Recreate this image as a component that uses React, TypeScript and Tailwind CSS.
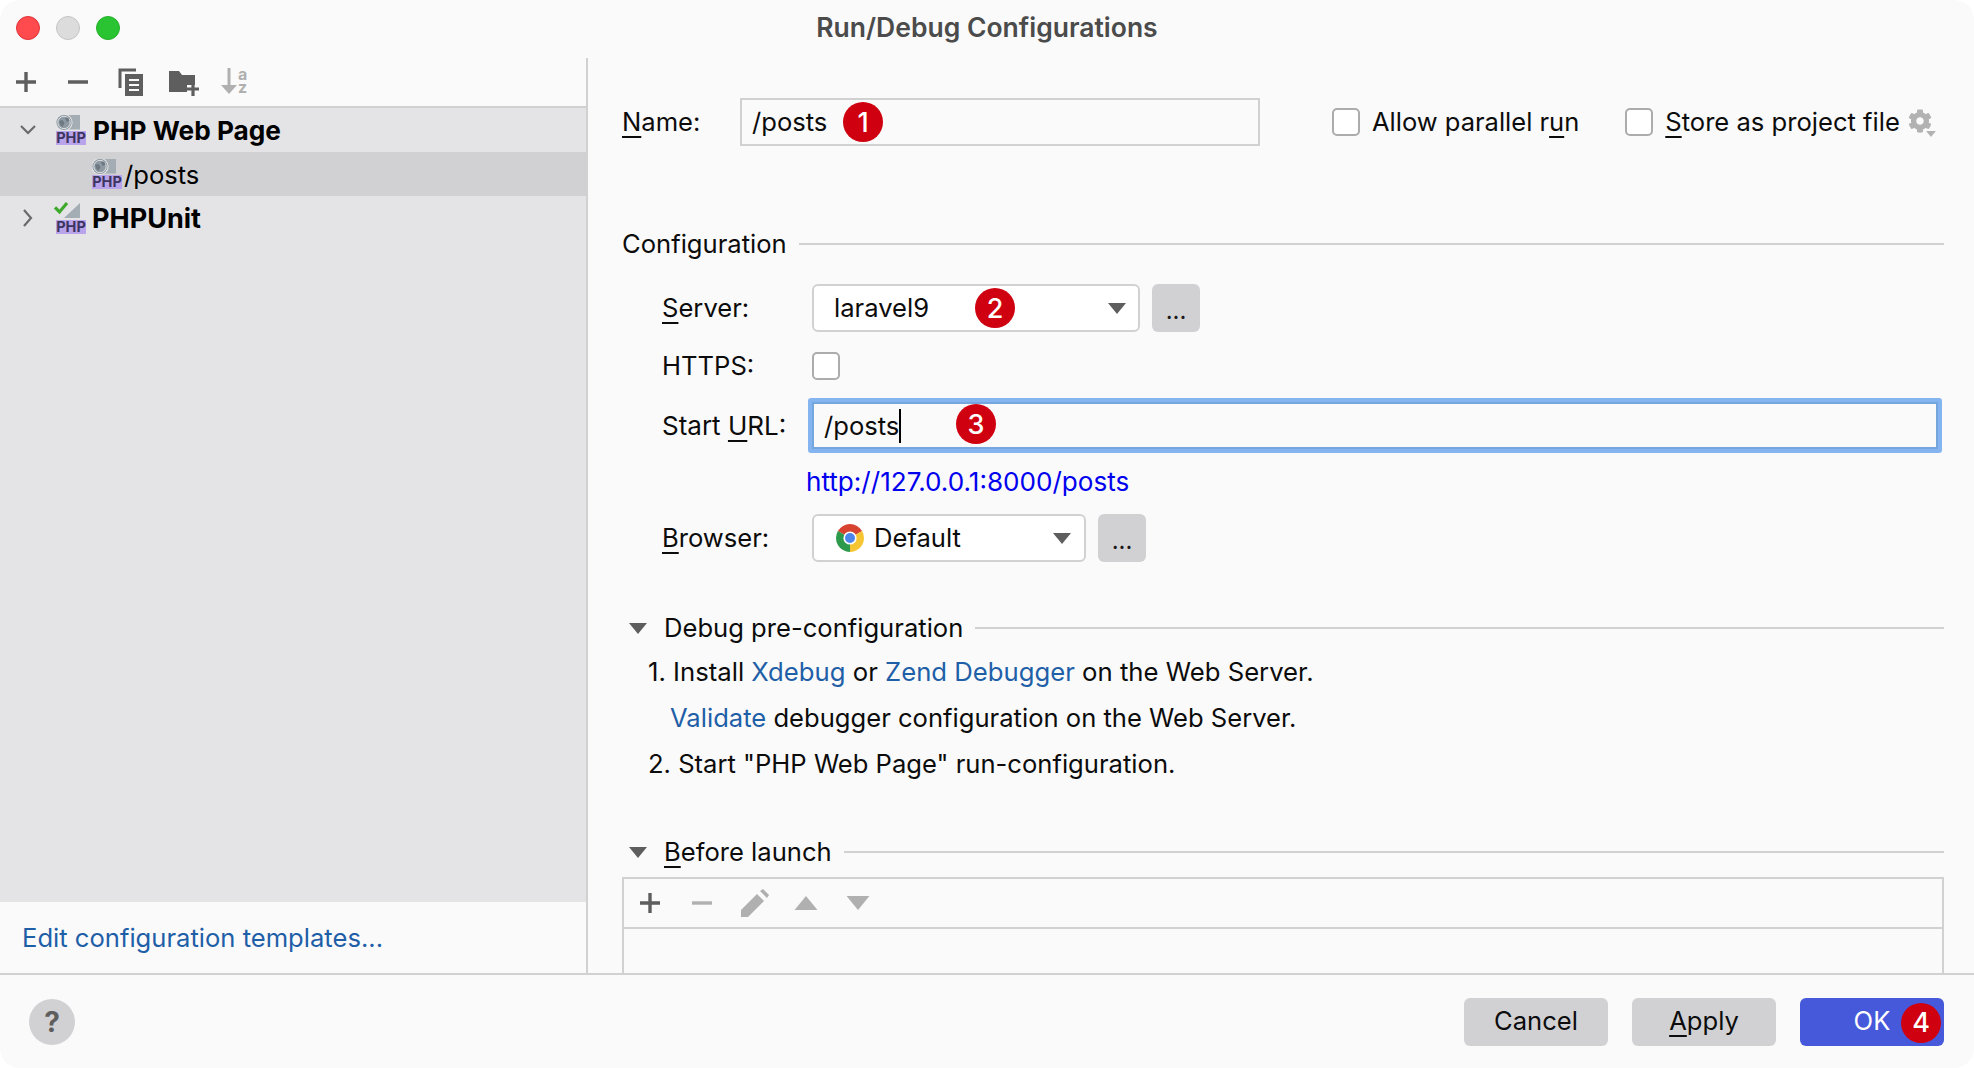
import React from "react";
import { FaCog } from "react-icons/fa";

const Badge = ({ n, className }: { n: number; className: string }) => (
  <span className={`absolute flex h-[40px] w-[40px] items-center justify-center rounded-full bg-[#cf0010] text-[27px] font-medium leading-none text-white ${className}`}>
    {n}
  </span>
);

const U = ({ children }: { children: React.ReactNode }) => (
  <span className="underline decoration-2 underline-offset-[5px] [text-decoration-skip-ink:none]">{children}</span>
);

const Plus = ({ c = "#5e5e5e" }: { c?: string }) => (
  <svg width="22" height="22" viewBox="0 0 22 22"><path d="M11 1v20M1 11h20" stroke={c} strokeWidth="3.4" /></svg>
);
const Minus = ({ c = "#5e5e5e" }: { c?: string }) => (
  <svg width="22" height="22" viewBox="0 0 22 22"><path d="M1 11h20" stroke={c} strokeWidth="3.4" /></svg>
);
const Caret = ({ c = "#5e5e5e", w = 18, h = 11, up = false }: { c?: string; w?: number; h?: number; up?: boolean }) => (
  <svg width={w} height={h} viewBox="0 0 18 11"><path d={up ? "M9 0L18 11H0Z" : "M0 0H18L9 11Z"} fill={c} /></svg>
);

const PhpLabel = ({ className = "left-0" }: { className?: string }) => (
  <span className={`absolute bottom-0 flex h-[14px] w-[30px] items-center justify-center bg-[#b9a3ea] text-[14.5px] font-bold leading-none text-[#3c3560] ${className}`}>
    PHP
  </span>
);

const PhpWebIcon = () => (
  <span className="relative block h-[30px] w-[30px] shrink-0">
    <svg className="absolute left-0 top-0" width="30" height="16" viewBox="0 0 30 16">
      <rect x="10" y="0" width="14" height="14.5" fill="#a4adb4" />
      <circle cx="8" cy="7.5" r="8.6" fill="#e4e4e6" />
      <circle cx="8" cy="7.5" r="7.6" fill="#8e9aa3" />
      <circle cx="8" cy="7.5" r="6.2" fill="none" stroke="#dfe0e2" strokeWidth="1" />
      <path d="M3 6l3.5-1 2 3-2 4-2-2ZM9 3l3-.5 1.6 3-3 1.5Z" fill="#6d7880" />
    </svg>
    <PhpLabel />
  </span>
);

const PhpUnitIcon = () => (
  <span className="relative block h-[32px] w-[32px] shrink-0">
    <svg className="absolute left-0 top-0" width="32" height="18" viewBox="0 0 32 18">
      <path d="M26 1v15H10Z" fill="#a4adb4" />
      <path d="M1 5.5l4.5 4.5L13 1" stroke="#3fa92e" strokeWidth="3.2" fill="none" />
    </svg>
    <PhpLabel className="left-[2px]" />
  </span>
);

const Chrome = () => (
  <svg width="28" height="28" viewBox="0 0 28 28" className="shrink-0">
    <path d="M14 14L1.88 7A14 14 0 0 1 26.12 7Z" fill="#d8432f" />
    <path d="M14 14L26.12 7A14 14 0 0 1 14 28Z" fill="#f6c533" />
    <path d="M14 14L14 28A14 14 0 0 1 1.88 7Z" fill="#2c9a4a" />
    <circle cx="14" cy="14" r="6.6" fill="#fff" />
    <circle cx="14" cy="14" r="5" fill="#4d86ea" />
  </svg>
);

const Checkbox = () => (
  <span className="block h-[28px] w-[28px] shrink-0 rounded-[5px] border-2 border-[#acacac] bg-white" />
);

const Dots = () => (
  <button className="flex h-[48px] w-[48px] shrink-0 items-end justify-center rounded-[6px] bg-[#d1d1d4] pb-[9px] text-[24px] leading-none text-[#1a1a1a]">
    ...
  </button>
);

const Section = ({ children, arrow = false, mt }: { children: React.ReactNode; arrow?: boolean; mt: string }) => (
  <div className={`flex h-[30px] items-center ${mt} ${arrow ? "pl-[7px]" : ""}`}>
    {arrow && <span className="mr-[17px] flex w-[18px] shrink-0"><Caret /></span>}
    <span className="shrink-0">{children}</span>
    <span className="ml-[12px] h-[2px] flex-1 bg-[#d1d1d1]" />
  </div>
);

const Link = ({ children }: { children: React.ReactNode }) => <span className="text-[#1f5fa8]">{children}</span>;

export default function App() {
  return (
    <div className="h-[1068px] w-[1974px] bg-white font-['Inter',sans-serif] text-[25.6px] text-[#0c0c0c]">
      <div className="flex h-full flex-col overflow-hidden rounded-[20px] bg-[#fafafa]">
        {/* Title bar */}
        <div className="relative flex h-[58px] shrink-0 items-center justify-center pb-[3px]">
          <div className="absolute left-[16px] top-[16px] flex gap-[16px]">
            <span className="h-[24px] w-[24px] rounded-full border border-[#e0353a] bg-[#ff4a4e]" />
            <span className="h-[24px] w-[24px] rounded-full border border-[#c4c4c4] bg-[#dcdcdc]" />
            <span className="h-[24px] w-[24px] rounded-full border border-[#25b02c] bg-[#2ac331]" />
          </div>
          <span className="text-[26.5px] font-semibold text-[#4b4b4b]">Run/Debug Configurations</span>
        </div>

        <div className="flex min-h-0 flex-1">
          {/* Sidebar */}
          <div className="flex w-[588px] shrink-0 flex-col border-r-2 border-[#d1d1d1]">
            <div className="flex h-[50px] shrink-0 items-center border-b-2 border-[#d1d1d1] pl-[15px]">
              <Plus />
              <span className="ml-[30px]"><Minus /></span>
              <svg className="ml-[29px]" width="26" height="28" viewBox="0 0 26 28">
                <path d="M2 20V2H18" fill="none" stroke="#5e5e5e" strokeWidth="3" />
                <path d="M7 6h18v22H7Z" fill="#5e5e5e" />
                <path d="M11 12h10M11 17h10M11 22h10" stroke="#fafafa" strokeWidth="2" />
              </svg>
              <svg className="ml-[25px]" width="30" height="28" viewBox="0 0 30 28">
                <path d="M0 3h10l3 4h13v10h-8v7H0Z" fill="#5e5e5e" />
                <path d="M24 14v14M17 21h13" stroke="#5e5e5e" strokeWidth="3.2" />
              </svg>
              <span className="relative ml-[22px] block h-[28px] w-[26px]">
                <svg className="absolute left-0 top-0" width="16" height="28" viewBox="0 0 16 28">
                  <path d="M8 0v22" stroke="#b0b0b0" strokeWidth="3" />
                  <path d="M0 17L8 26l8-9Z" fill="#b0b0b0" />
                </svg>
                <span className="absolute left-[17px] top-0 text-[16px] font-bold leading-[13px] text-[#b0b0b0]">a</span>
                <span className="absolute left-[17px] top-[13px] text-[16px] font-bold leading-[13px] text-[#b0b0b0]">z</span>
              </span>
            </div>

            <div className="flex-1 bg-[#e4e4e6]">
              <div className="flex h-[44px] items-center pl-[20px]">
                <svg width="16" height="10" viewBox="0 0 16 10"><path d="M1 1l7 7 7-7" fill="none" stroke="#6a6a6a" strokeWidth="2.2" /></svg>
                <span className="ml-[20px]"><PhpWebIcon /></span>
                <span className="ml-[7px] pt-[2px] text-[26.2px] font-bold leading-none text-black">PHP Web Page</span>
              </div>
              <div className="flex h-[44px] items-center bg-[#d1d1d3] pl-[92px]">
                <PhpWebIcon />
                <span className="ml-[2px] pt-[2px] leading-none text-black">/posts</span>
              </div>
              <div className="flex h-[44px] items-center pl-[23px]">
                <svg width="10" height="18" viewBox="0 0 10 18"><path d="M1 1l7 8-7 8" fill="none" stroke="#6a6a6a" strokeWidth="2.2" /></svg>
                <span className="ml-[21px]"><PhpUnitIcon /></span>
                <span className="ml-[6px] text-[27px] font-bold leading-none text-black">PHPUnit</span>
              </div>
            </div>

            <div className="flex h-[71px] shrink-0 items-center pl-[22px] pt-[2px]">
              <Link>Edit configuration templates...</Link>
            </div>
          </div>

          {/* Form */}
          <div className="flex min-w-0 flex-1 flex-col pl-[34px] pr-[30px]">
            <div className="mt-[40px] flex h-[48px] shrink-0 items-center">
              <span className="w-[118px] shrink-0"><U>N</U>ame:</span>
              <div className="relative flex h-[48px] w-[520px] shrink-0 items-center border-2 border-[#d1d1d1] pl-[10px]">
                /posts
                <Badge n={1} className="left-[101px] top-[2px]" />
              </div>
              <span className="ml-[72px]"><Checkbox /></span>
              <span className="ml-[12px] whitespace-nowrap text-[25.5px]">Allow parallel r<U>u</U>n</span>
              <span className="ml-[46px]"><Checkbox /></span>
              <span className="ml-[12px] whitespace-nowrap"><U>S</U>tore as project file</span>
              <span className="relative ml-[8px] block h-[26px] w-[26px] shrink-0">
                <FaCog className="h-[24px] w-[24px] text-[#b2b2b2]" />
                <span className="absolute bottom-[-2px] right-[-2px] flex"><Caret c="#b2b2b2" w={10} h={6} /></span>
              </span>
            </div>

            <Section mt="mt-[83px]">Configuration</Section>

            <div className="mt-[25px] flex h-[48px] shrink-0 items-center pl-[40px]">
              <span className="w-[150px] shrink-0"><U>S</U>erver:</span>
              <div className="relative flex h-[48px] w-[328px] shrink-0 items-center rounded-[6px] border-2 border-[#d1d1d1] bg-white pl-[20px]">
                laravel9
                <Badge n={2} className="left-[161px] top-[2px]" />
                <span className="absolute right-[12px] top-[17px] flex"><Caret /></span>
              </div>
              <span className="ml-[12px]"><Dots /></span>
            </div>

            <div className="mt-[20px] flex h-[28px] shrink-0 items-center pl-[40px]">
              <span className="w-[150px] shrink-0">HTTPS:</span>
              <Checkbox />
            </div>

            <div className="mt-[18px] flex h-[55px] shrink-0 items-center pl-[40px] pr-[2px]">
              <span className="w-[146px] shrink-0 text-[26px]">Start <U>U</U>RL:</span>
              <div className="relative flex h-[55px] flex-1 items-center rounded-[3px] border-[4px] border-[#85b5f0] bg-[#fafafa] pl-[12px] shadow-[inset_0_0_0_2px_#76a6de]">
                <span className="border-r-2 border-black leading-[34px]">/posts</span>
                <Badge n={3} className="left-[144px] top-[2px]" />
              </div>
            </div>

            <div className="mt-[14px] h-[30px] shrink-0 pl-[184px] text-[26.1px] leading-[30px] text-[#0000ee]">http://127.0.0.1:8000/posts</div>

            <div className="mt-[17px] flex h-[48px] shrink-0 items-center pl-[40px]">
              <span className="w-[150px] shrink-0"><U>B</U>rowser:</span>
              <div className="relative flex h-[48px] w-[274px] shrink-0 items-center rounded-[6px] border-2 border-[#d1d1d1] bg-white pl-[22px]">
                <Chrome />
                <span className="ml-[10px]">Default</span>
                <span className="absolute right-[13px] top-[17px] flex"><Caret /></span>
              </div>
              <span className="ml-[12px]"><Dots /></span>
            </div>

            <Section arrow mt="mt-[51px]">Debug pre-configuration</Section>

            <div className="mt-[14px] h-[30px] shrink-0 pl-[26px] text-[25.7px] leading-[30px]">1. Install <Link>Xdebug</Link> or <Link>Zend Debugger</Link> on the Web Server.</div>
            <div className="mt-[16px] h-[30px] shrink-0 pl-[48px] leading-[30px]"><Link>Validate</Link> debugger configuration on the Web Server.</div>
            <div className="mt-[16px] h-[30px] shrink-0 pl-[26px] leading-[30px]">2. Start "PHP Web Page" run-configuration.</div>

            <Section arrow mt="mt-[58px]"><U>B</U>efore launch</Section>

            <div className="mt-[10px] min-h-0 flex-1 border-x-2 border-t-2 border-[#d1d1d1]">
              <div className="flex h-[50px] items-center border-b-2 border-[#d1d1d1] pl-[15px]">
                <Plus />
                <span className="ml-[30px]"><Minus c="#b0b0b0" /></span>
                <svg className="ml-[28px]" width="28" height="28" viewBox="0 0 28 28">
                  <path d="M0 28v-7L16 5l7 7L7 28Z" fill="#b0b0b0" />
                  <path d="M19 2l3-2 6 6-2 3Z" fill="#b0b0b0" />
                </svg>
                <span className="ml-[24px] flex"><Caret c="#b0b0b0" w={26} h={14} up /></span>
                <span className="ml-[26px] flex"><Caret c="#b0b0b0" w={26} h={14} /></span>
              </div>
            </div>
          </div>
        </div>

        {/* Footer */}
        <div className="flex h-[95px] shrink-0 items-center border-t-2 border-[#d1d1d1] pl-[29px] pr-[30px]">
          <span className="flex h-[46px] w-[46px] items-center justify-center rounded-full bg-[#d1d1d4] text-[28px] font-bold text-[#5e5e5e]">?</span>
          <div className="ml-auto flex gap-[24px]">
            <button className="h-[48px] w-[144px] rounded-[6px] bg-[#d1d1d4]">Cancel</button>
            <button className="h-[48px] w-[144px] rounded-[6px] bg-[#d1d1d4]"><U>A</U>pply</button>
            <button className="relative h-[48px] w-[144px] rounded-[6px] bg-[#4659da] text-center text-white">
              OK
              <Badge n={4} className="right-[3px] top-[5px]" />
            </button>
          </div>
        </div>
      </div>
    </div>
  );
}
